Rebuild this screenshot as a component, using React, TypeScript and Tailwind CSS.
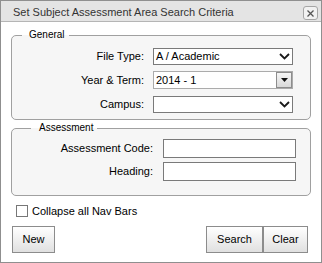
import React from "react";

const Chevron = () => (
  <svg width="11" height="7" viewBox="0 0 11 7" className="shrink-0">
    <polyline
      points="1,1 5.5,5.5 10,1"
      fill="none"
      stroke="#1a1a1a"
      strokeWidth="1.8"
    />
  </svg>
);

const SelectBox = ({ value }: { value: string }) => (
  <div className="ml-[9px] flex h-[17px] w-[140px] items-center justify-between border border-[#7a7a7a] bg-white pl-[2px] pr-[2px]">
    <span>{value}</span>
    <Chevron />
  </div>
);

const ClassicSelect = ({ value }: { value: string }) => (
  <div className="ml-[9px] flex h-[18px] w-[140px] items-stretch justify-between border border-[#ababab] bg-white pl-[2px]">
    <span className="self-center">{value}</span>
    <div className="flex w-[16px] items-center justify-center border border-[#8d8d8d] bg-gradient-to-b from-[#f6f6f6] to-[#d9d9d9]">
      <svg width="7" height="4" viewBox="0 0 7 4">
        <polygon points="0,0 7,0 3.5,4" fill="#111" />
      </svg>
    </div>
  </div>
);

const Button = ({ label, width }: { label: string; width: string }) => (
  <button
    type="button"
    className={`h-[27px] ${width} border border-[#8c8c8c] bg-gradient-to-b from-white to-[#e0e0e0] text-[11px] text-black`}
  >
    {label}
  </button>
);

export default function App() {
  return (
    <div className="flex h-[263px] w-[322px] flex-col border border-[#8f8f8f] bg-white font-['Liberation_Sans',Arial,sans-serif] text-[11px] text-black">
      {/* Title bar */}
      <div className="flex h-[21px] shrink-0 items-start justify-between border-b border-[#b5b5b5] bg-[#e4e4e4] pl-[12px] pr-[3px]">
        <span className="mt-[3px] text-[#333]">
          Set Subject Assessment Area Search Criteria
        </span>
        <button
          type="button"
          className="mt-[5px] flex h-[14px] w-[15px] items-center justify-center rounded-[3px] border border-[#a6a6a6] bg-[#f2f2f2]"
        >
          <svg width="7" height="7" viewBox="0 0 7 7">
            <path d="M0.5 0.5 L6.5 6.5 M6.5 0.5 L0.5 6.5" stroke="#555" strokeWidth="1.3" />
          </svg>
        </button>
      </div>

      <div className="flex flex-1 flex-col px-[10px]">
        {/* General */}
        <fieldset className="mt-[6px] rounded-[5px] border border-[#a0a0a0] bg-[#f6f6f6] pb-[6px] pt-[5px]">
          <legend className="ml-[10px] pl-[7px] pr-[4px] text-[10px] leading-[14px]">
            General
          </legend>
          <div className="flex flex-col gap-[6px]">
            <div className="flex h-[18px] items-center">
              <span className="w-[132px] text-right">File Type:</span>
              <SelectBox value="A / Academic" />
            </div>
            <div className="flex h-[18px] items-center">
              <span className="w-[132px] text-right">Year &amp; Term:</span>
              <ClassicSelect value="2014 - 1" />
            </div>
            <div className="flex h-[18px] items-center">
              <span className="w-[132px] text-right">Campus:</span>
              <SelectBox value="" />
            </div>
          </div>
        </fieldset>

        {/* Assessment */}
        <fieldset className="mt-[1px] rounded-[5px] border border-[#a0a0a0] bg-[#f6f6f6] pb-[14px] pt-[4px]">
          <legend className="ml-[19px] pl-[8px] pr-[4px] text-[10px] leading-[14px]">
            Assessment
          </legend>
          <div className="flex flex-col gap-[4px]">
            <div className="flex h-[19px] items-center">
              <span className="w-[141px] text-right">Assessment Code:</span>
              <div className="ml-[10px] h-[19px] w-[133px] border border-[#7a7a7a] bg-white" />
            </div>
            <div className="flex h-[19px] items-center">
              <span className="w-[141px] text-right">Heading:</span>
              <div className="ml-[10px] h-[19px] w-[133px] border border-[#7a7a7a] bg-white" />
            </div>
          </div>
        </fieldset>

        {/* Checkbox */}
        <div className="ml-[5px] mt-[9px] flex h-[12px] items-center">
          <span className="h-[12px] w-[12px] border border-[#777] bg-white" />
          <span className="ml-[4px]">Collapse all Nav Bars</span>
        </div>

        {/* Buttons */}
        <div className="mt-[9px] flex items-center justify-between pl-[1px] pr-[3px]">
          <Button label="New" width="w-[43px]" />
          <div className="flex">
            <Button label="Search" width="w-[57px]" />
            <Button label="Clear" width="w-[45px]" />
          </div>
        </div>
      </div>
    </div>
  );
}
